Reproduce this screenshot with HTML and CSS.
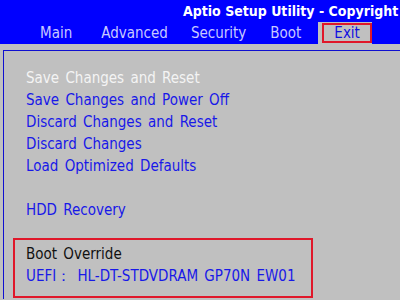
FILE: index.html
```html
<!doctype html>
<html lang="en">
<head>
    <meta charset="UTF-8">
    <title>Aptio Setup Utility</title>
    <link rel="stylesheet" href="styles.css">
</head>
<body>
<div class="header">
    <div class="title">Aptio Setup Utility - Copyright</div>
    <div class="tabs">
        <span class="tab tab-main">Main</span>
        <span class="tab tab-adv">Advanced</span>
        <span class="tab tab-sec">Security</span>
        <span class="tab tab-boot">Boot</span>
        <span class="tab active"><span class="mark">Exit</span></span>
    </div>
</div>
<div class="panel">
    <ul class="menu">
        <li class="selected">Save Changes and Reset</li>
        <li>Save Changes and Power Off</li>
        <li>Discard Changes and Reset</li>
        <li>Discard Changes</li>
        <li>Load Optimized Defaults</li>
        <li class="spacer"></li>
        <li>HDD Recovery</li>
    </ul>
    <div class="override">
        <div class="override-title">Boot Override</div>
        <div class="override-item">UEFI： HL-DT-STDVDRAM GP70N EW01</div>
    </div>
</div>
</body>
</html>
```

FILE: styles.css
```css
body {
    margin: 0;
    width: 400px;
    height: 300px;
    overflow: hidden;
    background-color: #C0C0C0;
    font-family: "DejaVu Sans Condensed", "DejaVu Sans", sans-serif;
    font-size: 15px;
}
.header {
    background-color: #0000FF;
    height: 44px;
    display: flex;
    flex-direction: column;
}
.title {
    color: #FFF;
    font-weight: bold;
    font-size: 14px;
    white-space: nowrap;
    padding-left: 183px;
    padding-top: 3px;
    height: 19px;
}
.tabs {
    display: flex;
    align-items: flex-end;
    flex: 1;
    color: #C8C8FF;
    white-space: nowrap;
}
.tab {
    line-height: 22px;
}
.tab-main { margin-left: 40px; }
.tab-adv { margin-left: 29px; }
.tab-sec { margin-left: 23px; }
.tab-boot { margin-left: 24px; }
.tab.active {
    margin-left: 17px;
    background-color: #C0C0C0;
    padding: 1px 0 0 4px;
    height: 21px;
}
.mark {
    display: block;
    border: 2px solid #E0182A;
    color: #1010E0;
    padding: 0 10px;
    line-height: 16px;
    height: 16px;
}
.panel {
    margin: 6px 0 0 3px;
    border-left: 1px solid #1010D0;
    border-top: 1px solid #1010D0;
    height: 249px;
    padding: 16px 0 0 9px;
    box-sizing: border-box;
}
.menu {
    list-style: none;
    margin: 0;
    padding: 0 0 0 13px;
    color: #1818E8;
    word-spacing: 2px;
}
.menu li {
    height: 22px;
    line-height: 22px;
    white-space: nowrap;
}
.menu li.selected {
    color: #F4F4F4;
}
.override {
    margin-top: 17px;
    width: 300px;
    height: 60px;
    border: 2px solid #E0182A;
    padding: 3px 0 0 11px;
    box-sizing: border-box;
    word-spacing: 2px;
}
.override-title {
    color: #111;
    line-height: 22px;
}
.override-item {
    color: #1818E8;
    line-height: 22px;
    white-space: nowrap;
}
```
